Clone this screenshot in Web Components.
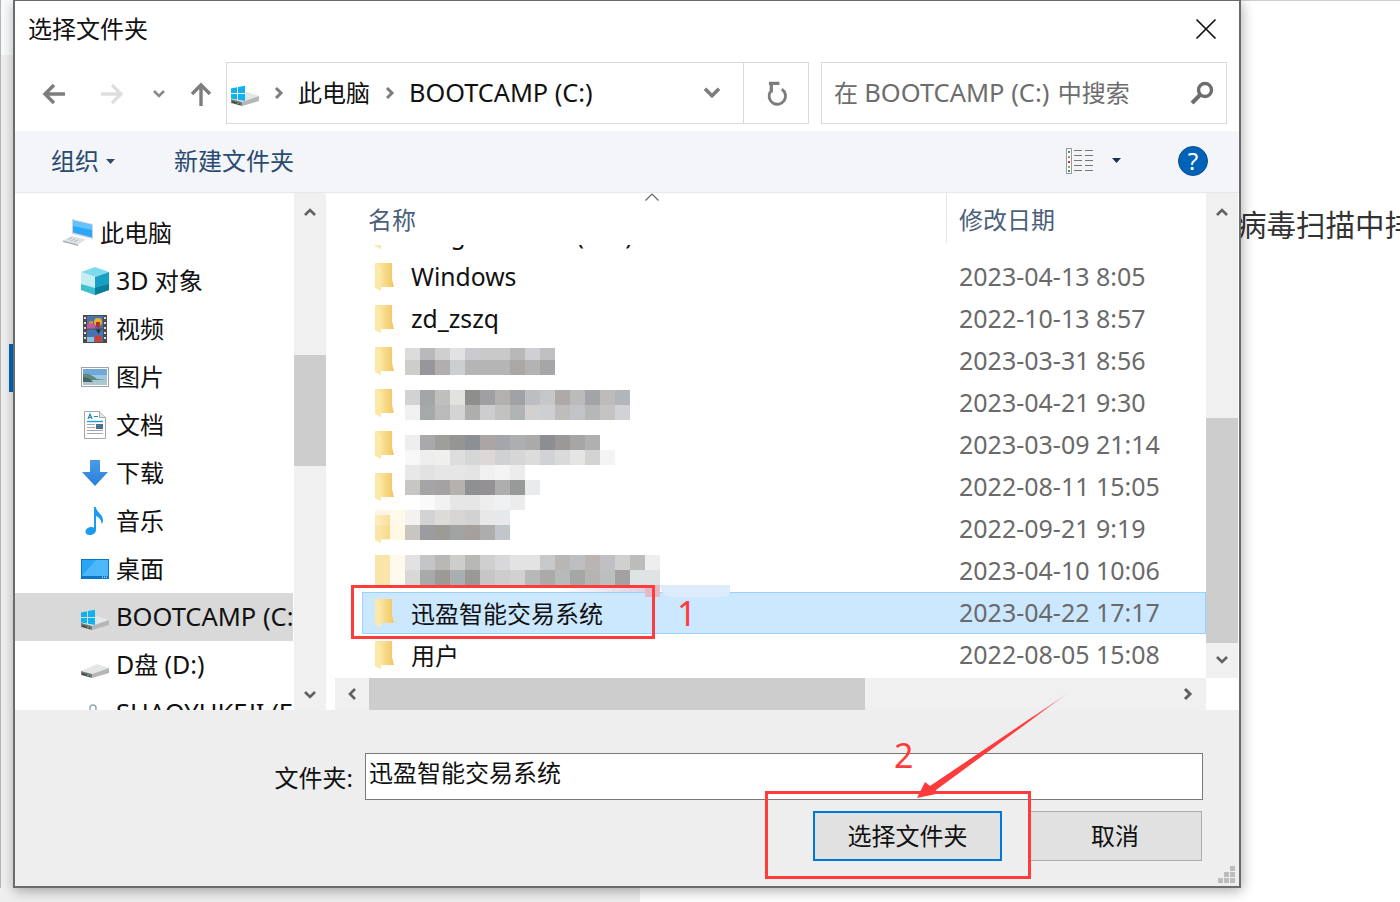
<!DOCTYPE html>
<html lang="zh">
<head>
<meta charset="utf-8">
<title>选择文件夹</title>
<style>
  html, body { margin: 0; height: 100%; background: #fff; }
  body { font-family: "Noto Sans", "Noto Sans CJK SC", sans-serif; overflow: hidden; }
</style>
</head>
<body>
<fs-desktop>
  <fs-dialog></fs-dialog>
  <fs-overlay></fs-overlay>
</fs-desktop>

<script>
const DRIVE_BODY = `
  <path d="M1 21 17 14l12 4-17 6z" fill="#e4e6e7"/>
  <path d="M1 21v4l11 3V24z" fill="#77797a"/>
  <path d="M12 24v4l17-5v-5z" fill="#b4b6b7"/>
  <path d="M2 23l8 2.5v1.5l-8-2.5z" fill="#3f4442"/>
  <rect x="7" y="25" width="2" height="1" fill="#41c463"/>`;

const ICONS = {
  back: `<svg viewBox="0 0 24 24"><path d="M23 12H4M12 3l-9 9 9 9" fill="none" stroke="currentColor" stroke-width="3.4"/></svg>`,
  up: `<svg viewBox="0 0 24 24"><path d="M12 24V3M3 12l9-9 9 9" fill="none" stroke="currentColor" stroke-width="3.4"/></svg>`,
  chevronDown: `<svg viewBox="0 0 14 10"><path d="M2 2l5 5 5-5" fill="none" stroke="currentColor" stroke-width="2.6"/></svg>`,
  chevronUp: `<svg viewBox="0 0 14 10"><path d="M2 8l5-5 5 5" fill="none" stroke="currentColor" stroke-width="2.6"/></svg>`,
  chevronLeft: `<svg viewBox="0 0 10 14"><path d="M8 2L3 7l5 5" fill="none" stroke="currentColor" stroke-width="2.6"/></svg>`,
  chevronRight: `<svg viewBox="0 0 10 14"><path d="M2 2l5 5-5 5" fill="none" stroke="currentColor" stroke-width="3"/></svg>`,
  close: `<svg viewBox="0 0 20 20"><path d="M.5.5l19 19M19.5.5l-19 19" fill="none" stroke="#111" stroke-width="1.7"/></svg>`,
  refresh: `<svg viewBox="0 0 22 26"><path d="M15.5 8.5A8.6 8.6 0 1 1 3.6 11" fill="none" stroke="currentColor" stroke-width="3"/><path d="M2 2.5h11M4.5 2.5V12" fill="none" stroke="currentColor" stroke-width="3.4"/></svg>`,
  search: `<svg viewBox="0 0 24 24"><circle cx="15" cy="9" r="6.5" fill="none" stroke="currentColor" stroke-width="3.4"/><path d="M10 14L2 22" stroke="currentColor" stroke-width="4"/></svg>`,
  caret: `<svg viewBox="0 0 9 5"><path d="M0 0h9L4.5 5z" fill="currentColor"/></svg>`,
  sort: `<svg viewBox="0 0 14 8"><path d="M.5 7.5 7 1l6.5 6.5" fill="none" stroke="#666" stroke-width="1.2"/></svg>`,
  help: `<svg viewBox="0 0 30 30"><circle cx="15" cy="15" r="14.5" fill="#0063b8" stroke="#0b4f8f"/></svg>`,
  details: `<svg viewBox="0 0 28 26">
    <rect x=".5" y=".5" width="5" height="25" fill="#fff" stroke="#9a9a9a"/>
    <rect x="2" y="3" width="2" height="2" fill="#3b86c4"/><rect x="2" y="8" width="2" height="2" fill="#b08a3a"/>
    <rect x="2" y="13" width="2" height="2" fill="#c4302b"/><rect x="2" y="18" width="2" height="2" fill="#8aa84a"/>
    <rect x="2" y="22" width="2" height="2" fill="#3b86c4"/>
    <path d="M8 2.5h8M19 2.5h8M8 7.5h8M19 7.5h8M8 12.5h8M19 12.5h8M8 17.5h8M19 17.5h8M8 22.5h8M19 22.5h8" stroke="#777" stroke-width="1.1"/>
  </svg>`,
  winDrive: `<svg viewBox="0 0 30 30">${DRIVE_BODY}
    <path d="M1 10.5l6-1.2v5.7H1zM8 9.1l7-1.3V15H8zM1 16h6v5.5l-6-1zM8 16h7v7l-7-1.3z" fill="#0fb2ee"/></svg>`,
  drive: `<svg viewBox="0 0 30 30">${DRIVE_BODY}</svg>`,
  pc: `<svg viewBox="0 0 32 28">
    <path d="M10 0l21 5v15L10 15z" fill="#cfd6dc"/><path d="M11 1.5l19 4.5v12.5L11 13.5z" fill="#2ea6f8"/>
    <path d="M11 1.5l19 4.5v5L11 7z" fill="#62c3fd"/>
    <path d="M1 21.5 10 17l14 3.5-8 5z" fill="#dfe2e4"/><path d="M1 21.5v1.5l15 4v-1.5z" fill="#a9adb0"/>
    <path d="M6 20.5l4-2M9 22l4-2.2M12 23l4-2.3" stroke="#b7bbbe" stroke-width="1"/>
  </svg>`,
  cube: `<svg viewBox="0 0 28 28">
    <path d="M14 0l14 5-14 5L0 5z" fill="#7ddcec"/>
    <path d="M0 5l14 5v18L0 23z" fill="#c6eef2"/>
    <path d="M28 5 14 10v18l14-5z" fill="#1a9fc4"/>
    <path d="M0 17l14 4v7L0 23z" fill="#3cc0cf"/>
    <path d="M14 21l14-4v6l-14 5z" fill="#0b7f99"/>
  </svg>`,
  video: `<svg viewBox="0 0 24 28">
    <rect width="24" height="28" fill="#4b4b4b"/>
    <path d="M1 2h2v2H1zM1 7h2v2H1zM1 12h2v2H1zM1 17h2v2H1zM1 22h2v2H1zM21 2h2v2h-2zM21 7h2v2h-2zM21 12h2v2h-2zM21 17h2v2h-2zM21 22h2v2h-2z" fill="#ddd"/>
    <rect x="4" y="1" width="16" height="12.5" fill="#4872b0"/><rect x="4" y="14.5" width="16" height="12.5" fill="#4872b0"/>
    <circle cx="15" cy="7" r="4" fill="#e2b52a"/><path d="M13 7h4v4l-2 2-2-2z" fill="#c02a22"/>
    <path d="M4 9h8v4.5H4z" fill="#c55a9b"/><path d="M6 6h4v3H6z" fill="#d4853a"/>
    <circle cx="15" cy="24" r="3.5" fill="#d0402a"/><path d="M4 22h7v5H4z" fill="#8fc1e0"/>
    <path d="M13 14.5h5L15.5 19z" fill="#2b2b2b"/>
  </svg>`,
  picture: `<svg viewBox="0 0 28 20">
    <rect x=".5" y=".5" width="27" height="19" fill="#fff" stroke="#a3a3a3"/>
    <rect x="2" y="2" width="24" height="16" fill="#9cc7e6"/>
    <path d="M2 2h24v6H2z" fill="#6ea9d8"/>
    <path d="M2 7c5-1 9 1 14 5l10 1v5H2z" fill="#5f8a80"/>
    <path d="M2 13h24v5H2z" fill="#a9c9cf"/>
    <path d="M2 10c4 0 8 2 10 5H2z" fill="#49695f"/>
  </svg>`,
  doc: `<svg viewBox="0 0 22 28">
    <path d="M.5.5h15l6 6v21H.5z" fill="#fff" stroke="#a6a6a6"/><path d="M15.5.5v6h6" fill="#e6e6e6" stroke="#a6a6a6"/>
    <path d="M4 8l2-5 2 5M5 6.5h2" fill="none" stroke="#1e88d2" stroke-width="1.2"/>
    <path d="M10 5.5h4" stroke="#1e88d2" stroke-width="1"/>
    <path d="M3 10.5h16" stroke="#1e9be0" stroke-width="1.4"/>
    <path d="M3 13.5h8M3 16.5h8M3 19.5h16M3 22.5h16" stroke="#a8a8a8" stroke-width="1"/>
    <rect x="12" y="13" width="7" height="5" fill="#48708c"/>
  </svg>`,
  download: `<svg viewBox="0 0 26 26"><defs><linearGradient id="d" x1="0" y1="0" x2="0" y2="1"><stop offset="0" stop-color="#4a9be8"/><stop offset="1" stop-color="#2a7fd8"/></linearGradient></defs>
    <path d="M8 0h10v12h8L13 26 0 12h8z" fill="url(#d)"/></svg>`,
  music: `<svg viewBox="0 0 20 28"><path d="M9 0h2c0 5 7 7 7 13 0 2-.6 3-1.5 4 .3-4-3-7-5.5-8v14c0 3-3 5-6.5 5C2 28 .5 26.5 .5 24.5 .5 22 3.5 20 6.5 20c1 0 1.8.2 2.5.5z" fill="#1c9cf0"/></svg>`,
  desktop: `<svg viewBox="0 0 28 20"><rect width="28" height="20" fill="#0a76c9"/><path d="M1 1h26v16H1z" fill="#2ba6f5"/><path d="M1 17 15 1h12v16z" fill="#4cb8fa"/><path d="M21 18.2h5" stroke="#fff" stroke-dasharray="1 1"/></svg>`,
  usb: `<svg viewBox="0 0 20 20"><path d="M5 8V5a3 3 0 0 1 6 0v3" fill="none" stroke="#9aa7b0" stroke-width="1.5"/><rect x="2" y="8" width="12" height="9" fill="#8cb4d2"/></svg>`,
  folder: `<svg viewBox="0 0 20 28"><defs><linearGradient id="f" x1="0" y1="0" x2="1" y2="0"><stop offset="0" stop-color="#fff0b8"/><stop offset="1" stop-color="#f2c660"/></linearGradient></defs>
    <path d="M0 0h17v16l2 8H6v4l-6-3z" fill="url(#f)"/><path d="M6 0v24H0V0z" fill="#fbe39a" opacity=".6"/><path d="M6 4 0 0v25l6 3z" fill="#fce9a8"/></svg>`
};

customElements.define('fs-icon', class extends HTMLElement {
  connectedCallback() {
    this.attachShadow({mode: 'open'});
    const w = this.getAttribute('w') || 24;
    const h = this.getAttribute('h') || w;
    this.shadowRoot.innerHTML = `
      <style>
        :host { display: inline-flex; flex: none; width: ${w}px; height: ${h}px; }
        svg { width: 100%; height: 100%; display: block; overflow: visible; }
      </style>
      ${ICONS[this.getAttribute('name')]}`;
  }
});

customElements.define('fs-desktop', class extends HTMLElement {
  connectedCallback() {
    this.attachShadow({mode: 'open'});
    this.shadowRoot.innerHTML = `
      <style>
        :host { display: block; position: relative; width: 1400px; height: 902px; overflow: hidden; background: #fff; }
        .left { position: absolute; left: 0; top: 0; width: 14px; height: 902px; background: #efefef; border-left: 1px solid #b5b5b5; box-sizing: border-box; }
        .left-top { position: absolute; left: 1px; top: 0; width: 13px; height: 55px; background: #f9fafb; }
        .blue { position: absolute; left: 9px; top: 344px; width: 4px; height: 48px; background: #0067c0; }
        .bottom { position: absolute; left: 0; top: 888px; width: 640px; height: 14px; background: #efefef; }
        .line { position: absolute; left: 1241px; top: 0; right: 0; height: 1px; background: #cfcfcf; }
        .behind { position: absolute; left: 1237px; top: 201px; font-size: 29.5px; line-height: 44px; color: #333; white-space: nowrap; font-family: "Noto Sans CJK SC", sans-serif; }
      </style>
      <div class="left"></div><div class="left-top"></div><div class="blue"></div>
      <div class="bottom"></div><div class="line"></div>
      <div class="behind">病毒扫描中排</div>
      <slot></slot>`;
  }
});

customElements.define('fs-scrollbar', class extends HTMLElement {
  connectedCallback() {
    this.attachShadow({mode: 'open'});
    const horizontal = this.hasAttribute('horizontal');
    const before = this.getAttribute('before');
    const size = this.getAttribute('size');
    const end = this.getAttribute('end') || 36;
    const first = horizontal ? 'chevronLeft' : 'chevronUp';
    const last = horizontal ? 'chevronRight' : 'chevronDown';
    const iw = horizontal ? 10 : 14, ih = horizontal ? 14 : 10;
    this.shadowRoot.innerHTML = `
      <style>
        :host { display: flex; flex: none; position: relative; background: #f0f0f0; color: #606060; ${horizontal ? 'height: 32px;' : 'width: 32px; flex-direction: column;'} }
        .thumb { position: absolute; background: #cdcdcd; ${horizontal ? `top: 0; bottom: 0; left: ${before}px; width: ${size}px;` : `left: 0; right: 0; top: ${before}px; height: ${size}px;`} }
        .arrow { display: flex; align-items: center; justify-content: center; flex: none; ${horizontal ? 'width: 34px;' : 'height: 38px;'} }
        .arrow.last { ${horizontal ? 'width: 36px;' : `height: ${end}px;`} }
        .grow { flex: 1; }
      </style>
      <div class="arrow"><fs-icon name="${first}" w="${iw}" h="${ih}"></fs-icon></div>
      <div class="grow"></div>
      <div class="thumb"></div>
      <div class="arrow last"><fs-icon name="${last}" w="${iw}" h="${ih}"></fs-icon></div>`;
  }
});

customElements.define('fs-nav-row', class extends HTMLElement {
  connectedCallback() {
    this.attachShadow({mode: 'open'});
    const w = this.getAttribute('w') || 28, h = this.getAttribute('h') || 28;
    const top = this.hasAttribute('top');
    this.shadowRoot.innerHTML = `
      <style>
        :host { display: flex; align-items: center; flex: none; height: 48px; white-space: nowrap; overflow: hidden;
          padding-left: ${top ? 48 : 65}px; background: ${this.hasAttribute('active') ? '#d9d9d9' : 'transparent'}; }
        .ic { width: 30px; flex: none; display: flex; justify-content: center; margin-right: ${top ? 7 : 6}px; }
        span { color: #111; font-size: 24px; padding-bottom: 3px; }
      </style>
      <div class="ic"><fs-icon name="${this.getAttribute('icon')}" w="${w}" h="${h}"></fs-icon></div>
      <span><slot></slot></span>`;
  }
});

customElements.define('fs-file-row', class extends HTMLElement {
  connectedCallback() {
    this.attachShadow({mode: 'open'});
    const on = this.hasAttribute('selected');
    this.shadowRoot.innerHTML = `
      <style>
        :host { display: grid; grid-template-columns: 584px 1fr; align-items: center; flex: none; height: 42px; box-sizing: border-box;
          margin-left: 29px; border: 1px solid ${on ? '#99d1ff' : 'transparent'}; background: ${on ? '#cce8ff' : 'transparent'}; white-space: nowrap; }
        .name { display: flex; align-items: center; gap: 16px; padding-left: 12px; color: #111; font-size: 24px; }
        .name span { padding-bottom: 2px; }
        .date { color: #6a6a6a; font-size: 25px; padding-left: 12px; padding-bottom: 2px; }
      </style>
      <div class="name"><fs-icon name="folder" w="20" h="28"></fs-icon><span><slot></slot></span></div>
      <div class="date">${this.getAttribute('date')}</div>`;
  }
});

customElements.define('fs-nav-pane', class extends HTMLElement {
  connectedCallback() {
    this.attachShadow({mode: 'open'});
    this.shadowRoot.innerHTML = `
      <style>
        :host { display: flex; flex: none; width: 318px; }
        .rows { width: 278px; flex: none; height: 517px; overflow: hidden; padding-top: 16px; box-sizing: border-box; display: flex; flex-direction: column; }
        .gap { width: 1px; background: #fff; flex: none; }
      </style>
      <div class="rows">
        <fs-nav-row top icon="pc" w="32" h="28">此电脑</fs-nav-row>
        <fs-nav-row icon="cube"><span style="font-size:25px">3D</span> 对象</fs-nav-row>
        <fs-nav-row icon="video" w="24">视频</fs-nav-row>
        <fs-nav-row icon="picture" h="20">图片</fs-nav-row>
        <fs-nav-row icon="doc" w="22">文档</fs-nav-row>
        <fs-nav-row icon="download" w="26" h="26">下载</fs-nav-row>
        <fs-nav-row icon="music" w="20">音乐</fs-nav-row>
        <fs-nav-row icon="desktop" h="20">桌面</fs-nav-row>
        <fs-nav-row icon="winDrive" w="30" h="30" active><span style="font-size:25.5px">BOOTCAMP (C:)</span></fs-nav-row>
        <fs-nav-row icon="drive" w="30" h="30"><span style="font-size:25px">D</span>盘 <span style="font-size:25px">(D:)</span></fs-nav-row>
        <fs-nav-row icon="usb" w="20" h="20"><span style="font-size:25.5px;padding-bottom:2px">SHAOYUKEJI (E:)</span></fs-nav-row>
      </div>
      <div class="gap"></div>
      <fs-scrollbar before="162" size="111" end="31"></fs-scrollbar>`;
  }
});

customElements.define('fs-file-list', class extends HTMLElement {
  connectedCallback() {
    this.attachShadow({mode: 'open'});
    this.shadowRoot.innerHTML = `
      <style>
        :host { display: flex; flex: 1; min-width: 0; }
        .col { flex: 1; min-width: 0; display: flex; flex-direction: column; padding-left: 15px; }
        .head { flex: none; height: 52px; display: grid; grid-template-columns: 598px 1fr; color: #4c607a; font-size: 24px; position: relative; }
        .head div { padding-left: 20px; padding-top: 6px; line-height: 42px; box-sizing: border-box; }
        .head .date { height: 50px; border-left: 1px solid #e5e5e5; padding-left: 12px; }
        .sort { position: absolute; left: 297px; top: 0; }
        .clip { height: 433px; overflow: hidden; flex: none; margin-left: -15px; }
        .rows { display: flex; flex-direction: column; margin-top: -31px; }
        fs-scrollbar.h { margin-left: -13px; }
        .v { height: 485px; }
        .corner { height: 32px; background: #fff; }
        .side { display: flex; flex-direction: column; flex: none; width: 33px; background: #fff; }
        .latin { font-size: 24.7px; }
      </style>
      <div class="col">
        <div class="head">
          <div>名称</div><div class="date">修改日期</div>
          <fs-icon class="sort" name="sort" w="14" h="8"></fs-icon>
        </div>
        <div class="clip"><div class="rows">
          <fs-file-row date="2023-04-21 9:12"><span class="latin">Program Files (x86)</span></fs-file-row>
          <fs-file-row date="2023-04-13 8:05"><span class="latin">Windows</span></fs-file-row>
          <fs-file-row date="2022-10-13 8:57"><span class="latin">zd_zszq</span></fs-file-row>
          <fs-file-row date="2023-03-31 8:56"></fs-file-row>
          <fs-file-row date="2023-04-21 9:30"></fs-file-row>
          <fs-file-row date="2023-03-09 21:14"></fs-file-row>
          <fs-file-row date="2022-08-11 15:05"></fs-file-row>
          <fs-file-row date="2022-09-21 9:19"></fs-file-row>
          <fs-file-row date="2023-04-10 10:06"></fs-file-row>
          <fs-file-row date="2023-04-22 17:17" selected>迅盈智能交易系统</fs-file-row>
          <fs-file-row date="2022-08-05 15:08">用户</fs-file-row>
        </div></div>
        <fs-scrollbar class="h" horizontal before="34" size="496"></fs-scrollbar>
      </div>
      <div class="side">
        <fs-scrollbar class="v" before="225" size="225"></fs-scrollbar>
        <div class="corner"></div>
      </div>`;
  }
});

customElements.define('fs-button', class extends HTMLElement {
  connectedCallback() {
    this.attachShadow({mode: 'open'});
    const primary = this.hasAttribute('primary');
    this.shadowRoot.innerHTML = `
      <style>
        :host { display: flex; align-items: center; justify-content: center; flex: none; width: ${primary ? 189 : 174}px; height: 50px; box-sizing: border-box; padding-bottom: 4px;
          background: #e1e1e1; color: #111; font-size: 24px; border: ${primary ? '2px solid #0078d7' : '1px solid #adadad'}; }
      </style>
      <slot></slot>`;
  }
});

customElements.define('fs-dialog', class extends HTMLElement {
  connectedCallback() {
    this.attachShadow({mode: 'open'});
    this.shadowRoot.innerHTML = `
      <style>
        :host { position: absolute; left: 13px; top: 0; width: 1228px; height: 888px; box-sizing: border-box; display: flex; flex-direction: column;
          background: #fff; border: 2px solid #6b6b6b; border-top-width: 1px; box-shadow: 1px 3px 12px rgba(0,0,0,.32); color: #111; }
        .title { flex: none; height: 59px; display: flex; align-items: center; justify-content: space-between; padding: 0 23px 3px 13px; box-sizing: border-box; font-size: 24px; }
        .title span { padding-bottom: 4px; }
        .nav { flex: none; height: 71px; display: flex; align-items: flex-start; padding-top: 2px; box-sizing: border-box; color: #7d7d7d; }
        .btns { width: 211px; flex: none; height: 62px; padding-top: 2px; box-sizing: border-box; display: flex; align-items: center; }
        .addr { width: 583px; height: 62px; flex: none; box-sizing: border-box; border: 1px solid #d9d9d9; display: flex; align-items: center; color: #111; font-size: 24px; }
        .addr .crumb { flex: 1; display: flex; align-items: center; height: 100%; padding-left: 3px; min-width: 0; white-space: nowrap; }
        .crumb span { padding-bottom: 3px; }
        .crumb .boot { font-size: 25.3px; }
        .sep { color: #7d7d7d; margin: 0 14px; }
        .sep.two { margin: 0 14px 0 15px; }
        .drop, .ref { height: 100%; display: flex; align-items: center; justify-content: center; color: #7d7d7d; flex: none; }
        .drop { width: 62px; }
        .ref { width: 65px; border-left: 1px solid #d9d9d9; box-sizing: border-box; padding-left: 2px; }
        .find { margin-left: 12px; width: 406px; height: 62px; flex: none; box-sizing: border-box; border: 1px solid #d9d9d9; display: flex; align-items: center; justify-content: space-between; padding: 0 12px; color: #6d6d6d; font-size: 24px; white-space: nowrap; }
        .find > span { padding-bottom: 3px; }
        .find i { font-style: normal; font-size: 25.5px; margin-right: 2px; }
        .tools { flex: none; height: 62px; box-sizing: border-box; background: #f3f5f8; border-bottom: 1px solid #e6e8ea; display: flex; align-items: center; padding-left: 36px; color: #2a4a6f; font-size: 24px; }
        .tools span { padding-bottom: 4px; }
        .tools .org { display: flex; align-items: center; gap: 7px; width: 123px; }
        .tools .right { margin-left: auto; display: flex; align-items: center; padding-bottom: 2px; }
        .help { position: relative; display: flex; width: 30px; height: 30px; margin: 0 31px 0 57px; }
        .help b { position: absolute; inset: 0; text-align: center; font: 400 24px/30px "Noto Sans", sans-serif; color: #fff; }
        .body { flex: 1; min-height: 0; display: flex; background: #fff; }
        .foot { flex: none; height: 176px; background: #eeeeee; position: relative; padding: 43px 37px 0 0; box-sizing: border-box; display: flex; flex-direction: column; align-items: flex-end; gap: 11px; font-size: 24px; }
        .field { display: flex; align-items: center; gap: 12px; width: 100%; justify-content: flex-end; margin-right: -1px; }
        .input { width: 838px; height: 47px; box-sizing: border-box; border: 1px solid #7a7a7a; background: #fff; padding: 0 3px 10px; display: flex; align-items: center; }
        label { padding-bottom: 1px; }
        .acts { display: flex; gap: 26px; }
        .grip { position: absolute; right: 3px; bottom: 2px; width: 18px; height: 18px;
          background:
            linear-gradient(#bdbdbd,#bdbdbd) 12px 0/5px 5px no-repeat,
            linear-gradient(#bdbdbd,#bdbdbd) 6px 6px/5px 5px no-repeat,
            linear-gradient(#bdbdbd,#bdbdbd) 12px 6px/5px 5px no-repeat,
            linear-gradient(#bdbdbd,#bdbdbd) 0 12px/5px 5px no-repeat,
            linear-gradient(#bdbdbd,#bdbdbd) 6px 12px/5px 5px no-repeat,
            linear-gradient(#bdbdbd,#bdbdbd) 12px 12px/5px 5px no-repeat; }
      </style>
      <div class="title"><span>选择文件夹</span><fs-icon name="close" w="20" h="20"></fs-icon></div>
      <div class="nav">
        <div class="btns">
          <fs-icon name="back" style="margin-left:27px" w="24" h="24"></fs-icon>
          <fs-icon name="back" style="margin-left:34px;color:#dfdfdf;transform:scaleX(-1)" w="24" h="24"></fs-icon>
          <fs-icon name="chevronDown" style="margin-left:28px;color:#8a8a8a" w="14" h="10"></fs-icon>
          <fs-icon name="up" style="margin-left:23px" w="24" h="24"></fs-icon>
        </div>
        <div class="addr">
          <div class="crumb">
            <fs-icon name="winDrive" w="30" h="30"></fs-icon>
            <fs-icon class="sep" name="chevronRight" w="10" h="14"></fs-icon>
            <span>此电脑</span>
            <fs-icon class="sep two" name="chevronRight" w="10" h="14"></fs-icon>
            <span class="boot">BOOTCAMP (C:)</span>
          </div>
          <div class="drop"><fs-icon name="chevronDown" w="20" h="14"></fs-icon></div>
          <div class="ref"><fs-icon name="refresh" w="21" h="25"></fs-icon></div>
        </div>
        <div class="find"><span>在 <i>BOOTCAMP (C:)</i> 中搜索</span><fs-icon name="search" w="24" h="24"></fs-icon></div>
      </div>
      <div class="tools">
        <div class="org"><span>组织</span><fs-icon name="caret" w="9" h="5"></fs-icon></div>
        <span>新建文件夹</span>
        <div class="right">
          <fs-icon name="details" w="28" h="26"></fs-icon>
          <fs-icon name="caret" style="margin-left:18px;color:#1e3050" w="9" h="5"></fs-icon>
          <div class="help"><fs-icon name="help" w="30" h="30"></fs-icon><b>?</b></div>
        </div>
      </div>
      <div class="body"><fs-nav-pane></fs-nav-pane><fs-file-list></fs-file-list></div>
      <div class="foot">
        <div class="field"><label>文件夹:</label><div class="input">迅盈智能交易系统</div></div>
        <div class="acts"><fs-button primary>选择文件夹</fs-button><fs-button>取消</fs-button></div>
        <div class="grip"></div>
      </div>`;
  }
});

// the blurred-out file names, cell colours copied off the screenshot
const MOSAICS = [
  {x: 405, y: 348, rows: [[12, 'dcdcdc b9b9bb cfcfcf e2e2e2 cbcbcf c9c9c9 c9c9c9 b8b8b8 d0d0d4 c0c0c0'],
    [15, 'cfcdcc 97979b b0aeaf ccced0 b5b5b5 b5b5b5 b5b5b5 a9a8a7 b3b3b3 a6a6a9']]},
  {x: 405, y: 390, rows: [[15, 'd2d2d2 a3a5a7 bfbfbd e2e2e0 8e8e8c a0a0a3 b2b1af 9fa3a5 bcbec1 c6c7c9 aeaaa9 bbbbbb a3a4a7 bebcba b3b6b8'],
    [15, 'f0f0f0 a5a9aa bababa d4d4d4 aeaeac cdcdcf c2c2c0 b0b4b5 d2d1cf cdcfd2 bfbdba c2c3c6 b7b7b7 c5c4c2 d1d2d5']]},
  {x: 405, y: 435, rows: [[15, 'eeeeee a9a9ac 9e9e9b 959593 8a9093 aaa6a4 a4a6a9 adaeb0 acaaa9 8c8e91 9a9997 a6a6a6 b0b0b0'],
    [15, 'f8f8f8 eeeeee efefee dddddd d5d7d6 dcd8d5 d0d1d4 d6d6d6 dcdcdc d1d2d5 dadada e5e5e3 d3d3d3 f3f4f5']]},
  {x: 405, y: 465, rows: [[15, 'e8e8e8 e2e2e2 e6e6e6 e6e6e6 e4e4e4 f0f0f0 f4f4f4 ececec'],
    [15, 'c8c5c5 a5a5a7 a5a2a3 b5b1ad 8e9194 939193 aeaeae 979a98 eaebed'],
    [15, 'ffffff fafafa f2f2f2 e6e6e6 e6e6e6 eeeeee f0f1f3 ececec']]},
  {x: 375, y: 510, rows: [[15, 'fdeec880 fff9ec f3f2f0 d2d3d5 dcdbd9 d6d5d3 d3d2d2 e8e8e8 e7e8ea'],
    [15, 'f9e3a680 fff8e3 c9c5c0 9b9c9f 9c9b96 a2a4a3 a5a09b adadad c1c5cc']]},
  {x: 375, y: 555, rows: [[15, 'f9e5a8 fffaeb e2e2e2 c4c5c7 b9b8b6 cdcdcb b8b8b6 cfcfcf d8d8da e3e3e3 e3e3e3 c8c9cb b9b7b5 bdbfc1 bab5b2 c0bfc3 d0d0d0 bcbdbb eeeeef'],
    [15, 'f9e5a8 fffaeb d8d8d6 a8a9ab 9c9996 a9aeb1 9b9997 c6c6c6 cdcdcd d0d1d0 b6b9b8 acaaa8 b6bab8 a6a6a4 b5b4b0 bcbec0 a3a1a2 dfe3e4 dfe3e4']]}
];

customElements.define('fs-mosaic', class extends HTMLElement {
  connectedCallback() {
    this.attachShadow({mode: 'open'});
    const m = MOSAICS[this.getAttribute('index')];
    const rows = m.rows.map(([h, cols]) => {
      const cells = cols.split(' ').map(c => `<i style="background:#${c}"></i>`).join('');
      return `<div style="height:${h}px">${cells}</div>`;
    }).join('');
    this.shadowRoot.innerHTML = `
      <style>
        :host { position: absolute; left: ${m.x}px; top: ${m.y}px; display: block; }
        div { display: flex; }
        i { display: block; width: 15px; height: 100%; flex: none; }
        div:first-child i:first-child { border-top-left-radius: 8px; }
      </style>
      ${rows}`;
  }
});

customElements.define('fs-overlay', class extends HTMLElement {
  connectedCallback() {
    this.attachShadow({mode: 'open'});
    const mosaics = MOSAICS.map((m, i) => `<fs-mosaic index="${i}"></fs-mosaic>`).join('');
    this.shadowRoot.innerHTML = `
      <style>
        :host { position: absolute; inset: 0; display: block; pointer-events: none; }
        .smear { position: absolute; }
        .box { position: absolute; box-sizing: border-box; border: 3px solid #ff3b3b; }
        .num { position: absolute; color: #ff3b3b; font: 400 34px/40px "Noto Sans", sans-serif; }
        svg { position: absolute; left: 0; top: 0; }
      </style>
      ${mosaics}
      <div class="smear" style="left:405px;top:585px;width:255px;height:7px;background:linear-gradient(90deg,#fff 60%,#dcc8da)"></div>
      <div class="smear" style="left:645px;top:585px;width:15px;height:12px;background:#e4b9c6"></div>
      <div class="smear" style="left:660px;top:585px;width:70px;height:12px;background:#dcecfc;border-radius:0 0 14px 30px"></div>
      <div class="box" style="left:351px;top:585px;width:304px;height:54px"></div>
      <div class="box" style="left:765px;top:791px;width:266px;height:88px"></div>
      <div class="num" style="left:677px;top:593px">1</div>
      <div class="num" style="left:894px;top:735px">2</div>
      <svg width="1400" height="902" viewBox="0 0 1400 902">
        <defs><linearGradient id="tail" x1="1068" y1="693" x2="1030" y2="720" gradientUnits="userSpaceOnUse">
          <stop offset="0" stop-color="#ff3b3b" stop-opacity=".35"/><stop offset="1" stop-color="#ff3b3b"/></linearGradient></defs>
        <path d="M917 798 925 782 930 786 1068 693 936 790 936 794z" fill="url(#tail)"/>
      </svg>`;
  }
});
</script>
</body>
</html>
